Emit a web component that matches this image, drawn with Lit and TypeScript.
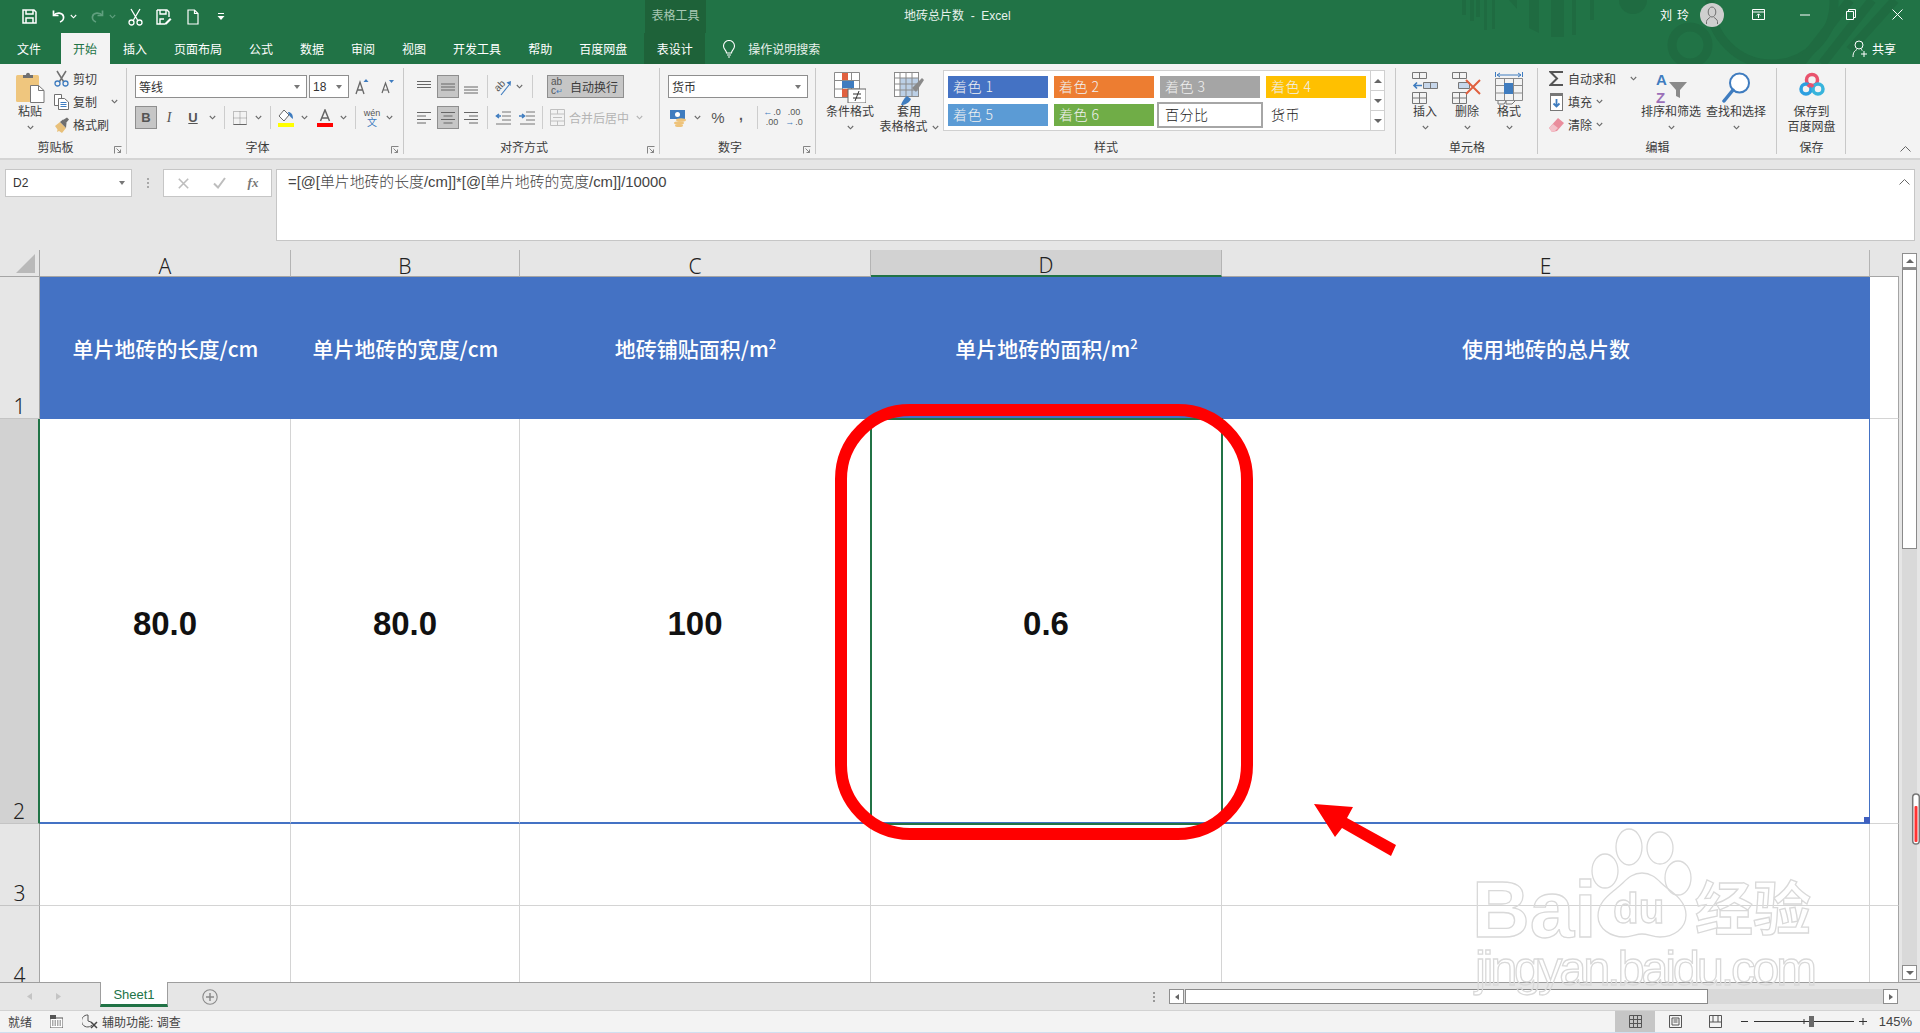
import { LitElement, html, css } from "lit";
import { customElement } from "lit/decorators.js";

const BLUE = "#3f7cbf";
const RED = "#e0603f";

const caret = (c = "#6a6a6a") => html`<svg class="ic" width="7" height="5" viewBox="0 0 7 5"><path d="M.8 1 3.5 3.8 6.2 1" fill="none" stroke=${c} stroke-width="1.1"/></svg>`;
const sep = () => html`<i class="vsep"></i>`;
const slot = (w: number, t: unknown) => html`<span class="slot" style="width:${w}px">${t}</span>`;

const I = {
  save: html`<svg class="ic" width="15" height="15" viewBox="0 0 15 15" fill="none" stroke="#fff" stroke-width="1.5"><path d="M1 1h11l2 2v11H1z"/><path d="M4 1v4h7V1M4 14V9h7v5"/></svg>`,
  undo: html`<svg class="ic" width="15" height="15" viewBox="0 0 15 15" fill="none" stroke="#fff" stroke-width="1.7"><path d="M2.5 1.5v5h5"/><path d="M2.5 6.5c3-3.5 9-3 10 1 .5 2.5-1 4.5-3.5 5.5"/></svg>`,
  redo: html`<svg class="ic" width="15" height="15" viewBox="0 0 15 15" fill="none" stroke="#5f9f7e" stroke-width="1.7"><path d="M12.5 1.5v5h-5"/><path d="M12.5 6.5c-3-3.5-9-3-10 1-.5 2.5 1 4.5 3.5 5.5"/></svg>`,
  cutW: html`<svg class="ic" width="15" height="18" viewBox="0 0 15 18" fill="none" stroke="#fff" stroke-width="1.3"><path d="M3 1l6.500 11M12 1 5.500 12"/><circle cx="3.500" cy="14.500" r="2.500"/><circle cx="11.500" cy="14.500" r="2.500"/></svg>`,
  saveAs: html`<svg class="ic" width="16" height="16" viewBox="0 0 16 16" fill="none" stroke="#fff" stroke-width="1.4"><path d="M1 1h10l2 2v5M9 15H1V1"/><path d="M4 1v4h6V1M4 15v-5h4"/><path d="M9 14l5-5 1.500 1.500-5 5H9z" fill="#fff" stroke="none"/></svg>`,
  newDoc: html`<svg class="ic" width="12" height="16" viewBox="0 0 12 16" fill="none" stroke="#fff" stroke-width="1.2"><path d="M1 1h6.500L11 4.500V15H1z"/><path d="M7.500 1v3.500H11"/></svg>`,
  custom: html`<svg class="ic" width="8" height="9" viewBox="0 0 8 9" fill="#fff"><path d="M1 1h6v1H1zM.5 4h7L4 8z"/></svg>`,
  bulb: html`<svg class="ic" width="14" height="18" viewBox="0 0 14 18" fill="none" stroke="#fff" stroke-width="1.1"><path d="M4.500 13c0-3-3-3.500-3-7a5.500 5.500 0 0 1 11 0c0 3.500-3 4-3 7z"/><path d="M5 15h4M6 17h2"/></svg>`,
  ribbonDisp: html`<svg class="ic" width="13" height="11" viewBox="0 0 13 11" fill="none" stroke="#fff"><path d="M.5.500h12v10H.5zM.5 3h12"/><path d="M6.500 9V5M4.800 6.500l1.700-1.700 1.700 1.700"/></svg>`,
  min: html`<svg class="ic" width="10" height="2" viewBox="0 0 10 2"><path d="M0 1h10" stroke="#fff"/></svg>`,
  restore: html`<svg class="ic" width="10" height="11" viewBox="0 0 10 11" fill="none" stroke="#fff"><path d="M.5 2.500h7v8h-7zM2.500 2.500v-2h7v8h-2"/></svg>`,
  close: html`<svg class="ic" width="11" height="11" viewBox="0 0 11 11" stroke="#fff"><path d="M.5.500l10 10M10.500.500l-10 10"/></svg>`,
  avatar: html`<svg class="ic" width="24" height="24" viewBox="0 0 24 24" fill="none" stroke="#6f6f6f"><circle cx="12" cy="12" r="12" fill="#cfcfcf" stroke="none"/><ellipse cx="12" cy="9" rx="3.800" ry="5"/><path d="M6.500 21v-2.500c0-2 2.500-3 3.800-4.500M17.500 21v-2.500c0-2-2.500-3-3.800-4.500"/></svg>`,
  share: html`<svg class="ic" width="16" height="18" viewBox="0 0 16 18" fill="none" stroke="#fff"><circle cx="7" cy="5" r="4"/><path d="M1 17c0-5 2-6.500 4-7.500M9 9.500l1.500.8M12 11v6M9 14h6"/></svg>`,
  paste: html`<svg class="ic" width="29" height="31" viewBox="0 0 29 31"><rect x="0" y="3" width="23" height="27" rx="1.500" fill="#efc67e"/><path d="M7 3h3c0-3 4-3 4 0h3v3H7z" fill="#707070"/><path d="M14.500 13.500h8l5.500 5v12H14.500z" fill="#fff" stroke="#777"/><path d="M22.500 13.500v5H28" fill="none" stroke="#777"/></svg>`,
  cut: html`<svg class="ic" width="15" height="17" viewBox="0 0 15 17" fill="none"><path d="M3 1l6.500 10.500M12 1 5.500 11.500" stroke="#707070" stroke-width="1.5"/><circle cx="3.500" cy="13.500" r="2.500" stroke="${BLUE}" stroke-width="1.3"/><circle cx="11.500" cy="13.500" r="2.500" stroke="${BLUE}" stroke-width="1.3"/></svg>`,
  copy: html`<svg class="ic" width="15" height="16" viewBox="0 0 15 16" fill="#fff" stroke="#707070"><path d="M.5.500h7v11h-7z"/><path d="M4.500 4.500h6l4 3.500v7.500h-10z"/><path d="M6.500 8.500h6M6.500 10.500h6M6.500 12.500h6" stroke="${BLUE}" fill="none"/></svg>`,
  painter: html`<svg class="ic" width="16" height="16" viewBox="0 0 16 16"><path d="M1 9l5-4 6 6-4 5-3-2-2 1 .5-2.500z" fill="#e8c07a"/><path d="M6 5l3-2.500 3.500 3.500L12 11z" fill="#6f6f6f"/><path d="M9 3l4-2.500 2 2L12 6z" fill="#6f6f6f"/></svg>`,
  launcher: html`<svg class="ic" width="8" height="8" viewBox="0 0 8 8" fill="none" stroke="#777"><path d="M.5 7.500v-7h7M2.500 2.500l4 4M3.500 6.500h3v-3" stroke-width=".9"/></svg>`,
  growA: html`<svg class="ic" width="14" height="16" viewBox="0 0 14 16"><path d="M1 15 5 3l4 12M2.500 11h5" fill="none" stroke="#666" stroke-width="1.3"/><path d="M8.500 3 11 0l2.500 3z" fill="${BLUE}"/></svg>`,
  shrinkA: html`<svg class="ic" width="13" height="14" viewBox="0 0 13 14"><path d="M1 13 4.500 3 8 13M2.200 10h4.600" fill="none" stroke="#666" stroke-width="1.2"/><path d="M8 0h5l-2.500 3z" fill="${BLUE}"/></svg>`,
  borders: html`<svg class="ic" width="14" height="14" viewBox="0 0 14 14" fill="none" stroke="#8a8a8a" stroke-dasharray="1 1"><path d="M.5.500h13v13H.5zM7 .5v13M.5 7h13"/><path d="M.5 13.500h13" stroke-dasharray="none" stroke="#666"/></svg>`,
  fill: html`<svg class="ic" width="17" height="18" viewBox="0 0 17 18"><path d="M6 1 1 7l5 5 5-6z" fill="#fff" stroke="#6a6a6a"/><path d="M10 3c3 0 5 2 5 7-2-1-3-3-4-4z" fill="${BLUE}"/><rect x="0" y="14" width="16" height="4" fill="#ffff00"/></svg>`,
  fontColor: html`<svg class="ic" width="17" height="18" viewBox="0 0 17 18"><path d="M3.500 12 8 1l4.500 11M5 9h6" fill="none" stroke="#666" stroke-width="1.5"/><rect x="0" y="14" width="16" height="4" fill="#f00"/></svg>`,
  orient: html`<svg class="ic" width="20" height="18" viewBox="0 0 20 18"><text x="0" y="0" font-size="10" fill="#555" font-family="Liberation Sans" transform="translate(5 14) rotate(-45)">ab</text><path d="M8 17 16 7" stroke="${BLUE}" stroke-width="1.2" fill="none"/><path d="M18 3l-.5 5-4-3.500z" fill="${BLUE}"/></svg>`,
  outdent: html`<svg class="ic" width="16" height="14" viewBox="0 0 16 14"><path d="M7 1h9M7 5h9M7 9h9M1 13h15" stroke="#777"/><path d="M6 5H2M4 3 1.500 5 4 7" stroke="${BLUE}" stroke-width="1.6" fill="none"/></svg>`,
  indent: html`<svg class="ic" width="16" height="14" viewBox="0 0 16 14"><path d="M7 1h9M7 5h9M7 9h9M1 13h15" stroke="#777"/><path d="M0 5h5M3 3 5.500 5 3 7" stroke="${BLUE}" stroke-width="1.6" fill="none"/></svg>`,
  merge: html`<svg class="ic" width="15" height="17" viewBox="0 0 15 17" fill="none" stroke="#c0c0c0"><path d="M.5.500h14v16H.5zM.5 5h14M.5 12h14M7.500.500V5M7.500 12v4.500"/><path d="M3 8.500h9"/></svg>`,
  acct: html`<svg class="ic" width="17" height="18" viewBox="0 0 17 18"><rect x="0" y="1" width="15" height="9" fill="${BLUE}"/><circle cx="7.500" cy="5.500" r="2.500" fill="#fff"/><ellipse cx="11" cy="11" rx="5" ry="1.800" fill="#eec37a"/><ellipse cx="9" cy="14" rx="5" ry="1.800" fill="#eec37a"/><ellipse cx="9" cy="16.500" rx="4" ry="1.500" fill="#eec37a"/></svg>`,
  condFmt: html`<svg class="ic" width="32" height="31" viewBox="0 0 32 31"><path d="M.5.500h25v25H.5zM8.500.500v25M17.500.500v25M.5 8.500h25M.5 17h25" fill="#fff" stroke="#8a8a8a"/><rect x="8" y="1" width="6" height="7" fill="${RED}"/><rect x="8" y="9" width="12" height="7" fill="${BLUE}"/><rect x="8" y="17" width="9" height="8" fill="${RED}"/><rect x="14" y="17" width="18" height="14" fill="#fff" stroke="#666"/><path d="M19 22h8M19 26h8M25 19l-4 10" stroke="#333" fill="none"/></svg>`,
  tableFmt: html`<svg class="ic" width="30" height="33" viewBox="0 0 30 33"><rect x=".5" y=".5" width="24" height="24" fill="#fff" stroke="#8a8a8a"/><rect x="6" y="6" width="18" height="18" fill="#bcd0e6"/><path d="M6 .5v24M12 .5v24M18 .5v24M.5 6h24M.5 12h24M.5 18h24" stroke="#8a8a8a" fill="none"/><path d="M18 16 28 6l2 2-8 12z" fill="#8a8a8a"/><path d="M7 33c1-3 3-7 6-9l4 3c-2 4-6 6-10 6" fill="${BLUE}"/></svg>`,
  ins: html`<svg class="ic" width="26" height="32" viewBox="0 0 26 32" fill="none" stroke="#777"><path d="M.5.500h14v6H.5zM7.500.500v6"/><path d="M11.500 10.500h14v6h-14zM18.500 10.500v6" fill="#c6d6ea"/><path d="M10 13.500H2M5 10.500l-3 3 3 3" stroke="${BLUE}" stroke-width="1.6"/><path d="M.5 20.500h14v11H.5zM7.500 20.500v11M.5 26h14"/></svg>`,
  del: html`<svg class="ic" width="30" height="32" viewBox="0 0 30 32" fill="none" stroke="#777"><path d="M.5.500h14v6H.5zM7.500.500v6"/><path d="M6.500 10.500h11v6h-11z" fill="#c6d6ea"/><path d="M.5 20.500h14v11H.5zM7.500 20.500v11M.5 26h14"/><path d="M14 8l14 14M28 8 14 22" stroke="${RED}" stroke-width="2"/></svg>`,
  fmt: html`<svg class="ic" width="28" height="34" viewBox="0 0 28 34" fill="none" stroke="#8a8a8a"><path d="M2 3h24" stroke="${BLUE}"/><path d="M.5 0v5M27.500 0v5M5 1 2 3l3 2M23 1l3 2-3 2" stroke="${BLUE}"/><path d="M.5 6.500h27v22H.5zM9.500 6.500v22M18.500 6.500v22M.5 13.500h27M.5 21h27"/><rect x="9" y="11" width="9" height="11" fill="${BLUE}" stroke="none"/><path d="M3 29v3h6l2-3M11 29v3h6l3-3" stroke="#777"/></svg>`,
  sigma: html`<svg class="ic" width="15" height="15" viewBox="0 0 15 15"><path d="M14 1H1.500L8 7.500 1.500 14H14" fill="none" stroke="#555" stroke-width="2"/></svg>`,
  fillDown: html`<svg class="ic" width="13" height="18" viewBox="0 0 13 18"><rect x=".5" y=".5" width="12" height="17" fill="#fff" stroke="#777"/><rect x="0" y="0" width="13" height="3" fill="#777"/><path d="M6.500 6v8M3.500 10.500l3 3 3-3" stroke="${BLUE}" stroke-width="1.8" fill="none"/></svg>`,
  eraser: html`<svg class="ic" width="15" height="14" viewBox="0 0 15 14"><path d="M9 0l6 5-7 8-5 1-3-4z" fill="#e98d9c"/><path d="M0 10l4-4 5 4-3 3-3 1z" fill="#f3c1c9"/></svg>`,
  sort: html`<svg class="ic" width="31" height="33" viewBox="0 0 31 33"><text x="0" y="13" font-size="15" font-weight="700" fill="${BLUE}" font-family="Liberation Sans">A</text><text x="0" y="31" font-size="15" font-weight="700" fill="#9b6fb8" font-family="Liberation Sans">Z</text><path d="M13 10h18l-7 8v8l-4-2v-6z" fill="#8a8a8a"/></svg>`,
  find: html`<svg class="ic" width="28" height="33" viewBox="0 0 28 33" fill="none" stroke="${BLUE}"><circle cx="17.500" cy="11" r="9.500" stroke-width="2" fill="#fff"/><path d="M11 18 2 29" stroke-width="3.5" stroke-linecap="round"/></svg>`,
  bdcloud: html`<svg class="ic" width="26" height="26" viewBox="0 0 26 26" fill="none" stroke-width="3.5"><circle cx="13" cy="8" r="5.500" stroke="#e9536d"/><circle cx="7" cy="17" r="5" stroke="#2d9fe0"/><circle cx="19" cy="17" r="5" stroke="#37b4dc"/><path d="M9 15c2-3 3-3 5 0" stroke="#e9536d"/></svg>`,
  collapse: html`<svg class="ic" width="11" height="6" viewBox="0 0 11 6"><path d="M.5 5.500l5-5 5 5" fill="none" stroke="#666"/></svg>`,
  x: html`<svg class="ic" width="11" height="11" viewBox="0 0 11 11"><path d="M.8.800l9.400 9.400M10.200.800.800 10.200" stroke="#bdbdbd" stroke-width="1.6"/></svg>`,
  check: html`<svg class="ic" width="13" height="12" viewBox="0 0 13 12"><path d="M1 6.500l4 4L12 1" fill="none" stroke="#bdbdbd" stroke-width="2"/></svg>`,
  plusCircle: html`<svg class="ic" width="16" height="16" viewBox="0 0 16 16" fill="none" stroke="#8a8a8a"><circle cx="8" cy="8" r="7.200" stroke-width="1.1"/><path d="M8 4v8M4 8h8" stroke-width="1.5"/></svg>`,
  macro: html`<svg class="ic" width="13" height="13" viewBox="0 0 13 13"><rect x="0" y="3" width="13" height="10" fill="#fff" stroke="#555"/><rect x="0" y="0" width="6" height="4" fill="#555"/><path d="M2 6h9M2 8h9M2 10h9" stroke="#555" stroke-dasharray="1.500 1"/></svg>`,
  access: html`<svg class="ic" width="17" height="15" viewBox="0 0 17 15" fill="none" stroke="#555"><path d="M6 1a6 6 0 1 0 4 10"/><path d="M6 1v6l3 1"/><path d="M9 8l6 6M15 8l-6 6" stroke="#444" stroke-width="1.5"/></svg>`,
  vNormal: html`<svg class="ic" width="13" height="13" viewBox="0 0 13 13" fill="none" stroke="#555"><path d="M.5.500h12v12H.5zM4.500.500v12M8.500.500v12M.5 4.500h12M.5 8.500h12"/></svg>`,
  vPage: html`<svg class="ic" width="13" height="13" viewBox="0 0 13 13" fill="none" stroke="#555"><path d="M.5.500h12v12H.5zM3 3h7v7H3zM4.500 5h4M4.500 7h4"/></svg>`,
  vBreak: html`<svg class="ic" width="13" height="13" viewBox="0 0 13 13" fill="none" stroke="#555"><path d="M.5.500h12v12H.5zM.5 7h12M4 .5V7M9 .5V7" /></svg>`,
  triL: html`<svg class="ic" width="5" height="7" viewBox="0 0 5 7"><path d="M5 0v7L0 3.500z" fill="#c4c4c4"/></svg>`,
  triR: html`<svg class="ic" width="5" height="7" viewBox="0 0 5 7"><path d="M0 0v7l5-3.500z" fill="#c4c4c4"/></svg>`,
};

const alignIcon = (kind: string) => {
  const paths: Record<string, string> = {
    top: "M0 1.500h14M0 4.500h14M0 7.500h14",
    mid: "M0 4h14M0 7h14M0 10h14",
    bot: "M0 7h14M0 10h14M0 13h14",
    left: "M0 1.500h14M0 5h9M0 8.500h14M0 12h9",
    center: "M0 1.500h14M2.500 5h9M0 8.500h14M2.500 12h9",
    right: "M0 1.500h14M5 5h9M0 8.500h14M5 12h9",
  };
  return html`<svg class="ic" width="14" height="14" viewBox="0 0 14 14"><path d=${paths[kind]} stroke="#666" fill="none"/></svg>`;
};

const COLS = [
  { k: "A", head: html`单片地砖的长度/cm`, val: "80.0" },
  { k: "B", head: html`单片地砖的宽度/cm`, val: "80.0" },
  { k: "C", head: html`地砖铺贴面积/m<sup>2</sup>`, val: "100" },
  { k: "D", head: html`单片地砖的面积/m<sup>2</sup>`, val: "0.6" },
  { k: "E", head: html`使用地砖的总片数`, val: "" },
];
const TABS = ["文件", "开始", "插入", "页面布局", "公式", "数据", "审阅", "视图", "开发工具", "帮助", "百度网盘"];
const STYLES = [
  ["着色 1", "s1"], ["着色 2", "s2"], ["着色 3", "s3"], ["着色 4", "s4"],
  ["着色 5", "s5"], ["着色 6", "s6"], ["百分比", "s7"], ["货币", "s8"],
];

@customElement("app-root")
export class AppRoot extends LitElement {
  static styles = css`
    :host { display: block; width: 1920px; height: 1033px; overflow: hidden; font-family: "Liberation Sans", "Noto Sans CJK SC", sans-serif; font-size: 12px; color: #3c3c3c; }
    * { box-sizing: border-box; }
    .ic { display: block; flex: none; }
    .app { position: relative; width: 1920px; height: 1033px; display: flex; flex-direction: column; background: #e6e6e6; overflow: hidden; }
    .slot { display: flex; align-items: center; justify-content: center; flex: none; height: 100%; }
    .vsep { display: block; width: 1px; height: 23px; background: #cdcdcd; }

    .top { position: relative; background: #217346; color: #fff; height: 64px; display: flex; flex-direction: column; flex: none; }
    .deco { position: absolute; left: 0; top: 0; }
    .trow { position: relative; display: flex; align-items: center; height: 33px; flex: none; }
    .qat { display: flex; align-items: center; width: 645px; height: 100%; padding-left: 21px; }
    .tools { width: 61px; height: 100%; background: #1e6239; color: #a8c8b4; display: flex; align-items: center; justify-content: center; padding-bottom: 4px; }
    .doc { margin-left: 198px; padding-bottom: 4px; white-space: nowrap; color: #e8f1ec; }
    .user { margin-left: auto; display: flex; align-items: center; height: 100%; padding-bottom: 4px; }
    .uname { letter-spacing: 5px; margin-right: 6px; }
    .tabs { position: relative; display: flex; height: 31px; align-items: stretch; padding-left: 3.5px; }
    .tab { padding: 0 13.5px 1px; display: flex; align-items: center; white-space: nowrap; }
    .tab.on { background: #f3f3f3; color: #217346; width: 49px; justify-content: center; padding: 0 0 1px; margin: 0 0 0 6px; }
    .tab.ctx { background: #1e6239; width: 61px; justify-content: center; padding: 0 0 1px; margin-left: 3.5px; }
    .tell { display: flex; align-items: center; gap: 12px; margin-left: 17px; color: #e8f1ec; }
    .shareb { margin-left: auto; display: flex; align-items: center; gap: 4px; padding-right: 24px; }

    .ribbon { display: flex; height: 96px; flex: none; background: #f3f3f3; border-bottom: 2px solid #d4d4d4; position: relative; }
    .grp { position: relative; display: flex; flex-direction: column; height: 94px; flex: none; }
    .grp::after { content: ""; position: absolute; right: 0; top: 4px; bottom: 4px; width: 1px; background: #c8c8c8; }
    .gbody { height: 75px; display: flex; flex: none; }
    .glabel { height: 18px; text-align: center; line-height: 18px; }
    .hasl .glabel { padding-right: 16px; }
    .launch { position: absolute; right: 5px; bottom: 4px; }
    .w1 { width: 127px; } .w2 { width: 277px; } .w3 { width: 256px; } .w4 { width: 156px; } .w5 { width: 580px; } .w6 { width: 142px; } .w7 { width: 239px; } .w8 { width: 69px; }
    .big { display: flex; flex-direction: column; align-items: center; padding-top: 8px; flex: none; line-height: 15px; white-space: nowrap; }
    .bigic { height: 33px; display: flex; align-items: flex-start; justify-content: center; }
    .bcaret { height: 15px; display: flex; align-items: center; }
    .inl { display: flex; align-items: center; gap: 4px; }
    .small { display: flex; flex-direction: column; padding-top: 3px; flex: none; }
    .srow { display: flex; align-items: center; height: 23px; gap: 4px; white-space: nowrap; }
    .sicon { width: 15px; display: flex; justify-content: center; flex: none; }
    .two { display: flex; flex-direction: column; padding-top: 11px; gap: 8px; }
    .row { display: flex; height: 23px; align-items: center; }
    .combo { height: 23px; background: #fff; border: 1px solid #8e8e8e; display: flex; align-items: center; padding: 0 3px; flex: none; justify-content: space-between; font-size: 12px; color: #333; }
    .tri { width: 0; height: 0; border-left: 3.5px solid transparent; border-right: 3.5px solid transparent; border-top: 4px solid #777; margin-right: 3px; }
    .sel { background: #c6c6c6; border: 1px solid #8e8e8e; height: 23px; display: flex; align-items: center; justify-content: center; flex: none; }
    .b22 { width: 22px; }
    .bb { font-weight: 700; font-size: 13px; color: #555; font-family: "Liberation Sans", sans-serif; }
    .ii { font-style: italic; font-size: 14px; color: #555; font-family: "Liberation Serif", serif; }
    .uu { text-decoration: underline; font-weight: 700; font-size: 13px; color: #555; font-family: "Liberation Sans", sans-serif; }
    .wen { display: flex; flex-direction: column; align-items: center; font-size: 9px; line-height: 10px; color: #555; }
    .wen b { color: #3f7cbf; font-weight: 400; font-size: 10px; }
    .wrap { width: 77px; margin-left: 6px; gap: 5px; justify-content: flex-start; padding-left: 3px; }
    .abc { font-size: 10px; line-height: 9px; color: #555; width: 14px; }
    .abc b { color: #3f7cbf; font-weight: 400; font-size: 8px; }
    .gray { color: #b4b4b4; white-space: nowrap; }
    .pct { font-size: 15px; color: #555; }
    .cma { font-size: 14px; font-weight: 700; color: #555; font-family: "Liberation Sans", sans-serif; position: relative; top: -3px; }
    .dec { display: flex; align-items: center; font-size: 9px; line-height: 9px; color: #555; gap: 1px; white-space: pre; flex-direction: column; }
    .dec span { display: flex; align-items: center; gap: 1px; }
    .dec em { color: #3f7cbf; font-style: normal; font-weight: 700; }

    .gallery { width: 442px; height: 61px; margin: 6px 0 0 3px; background: #fff; border: 1px solid #d0d0d0; display: flex; flex: none; }
    .gcells { width: 426px; display: grid; grid-template-columns: repeat(4, 100px); grid-auto-rows: 22px; gap: 6px; padding: 5px 4px 0 4px; }
    .st { display: flex; align-items: center; padding: 0 0 2px 5px; font-size: 14px; letter-spacing: .5px; color: #f0f0f0; font-family: "Noto Sans CJK SC", sans-serif; font-weight: 300; }
    .s1 { background: #4472c4; } .s2 { background: #ed7d31; } .s3 { background: #a5a5a5; } .s4 { background: #ffc000; } .s5 { background: #5b9bd5; } .s6 { background: #70ad47; }
    .s7 { outline: 2px solid #a6a6a6; outline-offset: 1px; color: #222; margin: 1px 0; }
    .s8 { color: #222; }
    .gscroll { width: 15px; margin-left: auto; display: flex; flex-direction: column; border-left: 1px solid #d0d0d0; }
    .gscroll span { flex: 1; display: flex; align-items: center; justify-content: center; border-bottom: 1px solid #d0d0d0; }
    .gscroll span:last-child { border-bottom: none; }
    .tup { width: 0; height: 0; border-left: 4px solid transparent; border-right: 4px solid transparent; border-bottom: 4px solid #666; }
    .tdn { width: 0; height: 0; border-left: 4px solid transparent; border-right: 4px solid transparent; border-top: 4px solid #666; }
    .collapse { position: absolute; right: 9px; bottom: 6px; }

    .fbar { height: 90px; flex: none; padding: 9px 5px 0 5px; display: flex; background: #e6e6e6; align-items: flex-start; }
    .name { width: 127px; height: 28px; background: #fff; border: 1px solid #c6c6c6; display: flex; align-items: center; justify-content: space-between; padding: 0 3px 0 7px; color: #333; }
    .dots { width: 31px; height: 28px; display: flex; flex-direction: column; align-items: center; justify-content: center; gap: 2px; }
    .dots i { width: 2px; height: 2px; background: #a8a8a8; display: block; }
    .fx { width: 109px; height: 28px; background: #fff; border: 1px solid #c6c6c6; display: flex; align-items: center; }
    .fxt { font-family: "Liberation Serif", serif; font-style: italic; font-weight: 700; font-size: 13px; color: #777; }
    .formula { margin-left: 4px; width: 1639px; height: 72px; background: #fff; border: 1px solid #c6c6c6; padding: 3px 0 0 11px; display: flex; justify-content: space-between; color: #444; line-height: 18px; font-size: 14.85px; font-weight: 300; }
    .fcaret { margin: 6px 4px 0 0; }

    .sheet { height: 732px; flex: none; display: flex; }
    .grid { width: 1899px; height: 732px; display: grid; grid-template-columns: 40px 251px 229px 351px 351px 648px 29px; grid-template-rows: 27px 142px 405px 82px 82px; background: #fff; overflow: hidden; }
    .corner { background: #e6e6e6; border-bottom: 1px solid #a5a5a5; border-right: 1px solid #a5a5a5; display: flex; justify-content: flex-end; align-items: flex-end; padding: 0 4px 3px 0; }
    .ch { background: #e6e6e6; border-bottom: 1px solid #a5a5a5; border-right: 1px solid #b4b4b4; display: flex; align-items: center; justify-content: center; padding-top: 5px; font-size: 21px; color: #222; font-family: "Noto Sans", sans-serif; font-weight: 300; }
    .ch.on { background: #d2d2d2; border-bottom: 2px solid #217346; }
    .ch.blank { background: #e6e6e6; border-right: none; }
    .rh { background: #e6e6e6; border-right: 1px solid #a5a5a5; border-bottom: 1px solid #c4c4c4; display: flex; align-items: flex-end; justify-content: center; font-size: 21px; line-height: 23px; color: #222; font-family: "Noto Sans", sans-serif; font-weight: 300; }
    .rh.on { background: #d2d2d2; border-right: 2px solid #217346; }
    .th { background: #4472c4; color: #fff; display: flex; align-items: center; justify-content: center; font-size: 21px; font-weight: 500; font-family: "Noto Sans CJK SC", sans-serif; white-space: nowrap; }
    .th sup { font-size: 13px; line-height: 0; position: relative; top: -4px; vertical-align: super; }
    .td { border-right: 1px solid #d4d4d4; border-bottom: 1px solid #d4d4d4; display: flex; align-items: center; justify-content: center; padding-top: 7px; font-size: 33px; font-weight: 700; color: #111; background: #fff; position: relative; }
    .td.last { border-bottom: 2px solid #4472c4; }
    .td.edge { border-right: 1px solid #4472c4; }
    .td.active { outline: 2px solid #217346; outline-offset: -1px; z-index: 1; }
    .blankc { border-bottom: 1px solid #d4d4d4; border-right: 1px solid #a5a5a5; background: #fff; }
    .handle { position: absolute; right: -1px; bottom: -1px; width: 6px; height: 6px; background: #3f5fbf; }

    .vs { width: 21px; background: #e6e6e6; padding: 3px 3px 2px 3px; display: flex; flex-direction: column; }
    .vtrack { flex: 1; background: #d9d9d9; display: flex; flex-direction: column; }
    .vbtn { height: 15px; flex: none; background: #fff; border: 1px solid #8e8e8e; display: flex; align-items: center; justify-content: center; }
    .vthumb { height: 281px; background: #fff; border: 1px solid #8a8a8a; border-top: 2px solid #8a8a8a; }
    .vspace { flex: 1; }

    .tbar { height: 28px; flex: none; border-top: 1px solid #9e9e9e; background: #e6e6e6; display: flex; align-items: flex-start; position: relative; z-index: 2; }
    .nav { display: flex; align-items: center; height: 27px; padding-left: 27px; gap: 24px; width: 100px; }
    .stab { width: 68px; height: 25px; background: #fff; border-bottom: 3px solid #217346; border-left: 1px solid #9e9e9e; border-right: 1px solid #9e9e9e; margin-top: -1px; padding-top: 2px; display: flex; align-items: center; justify-content: center; color: #217346; font-size: 13px; }
    .plus { margin-left: 34px; height: 27px; display: flex; align-items: center; }
    .hdots { margin-left: 934px; height: 27px; display: flex; flex-direction: column; align-items: center; justify-content: center; gap: 2px; width: 3px; }
    .hdots i { width: 2px; height: 2px; background: #999; display: block; }
    .hs { margin: 6px 0 0 14px; width: 729px; height: 15px; display: flex; background: #d9d9d9; }
    .hbtn { width: 15px; background: #fff; border: 1px solid #8e8e8e; display: flex; align-items: center; justify-content: center; flex: none; }
    .hbtn .tl { width: 0; height: 0; border-top: 3.5px solid transparent; border-bottom: 3.5px solid transparent; border-right: 4px solid #666; }
    .hbtn .tr { width: 0; height: 0; border-top: 3.5px solid transparent; border-bottom: 3.5px solid transparent; border-left: 4px solid #666; }
    .hthumb { width: 523px; margin-left: 1px; background: #fff; border: 1px solid #8a8a8a; }

    .status { height: 23px; flex: none; background: #f3f3f3; border-top: 1px solid #d2d2d2; border-bottom: 1px solid #cfdff0; display: flex; align-items: stretch; color: #444; position: relative; z-index: 2; }
    .sl { display: flex; align-items: center; padding-left: 8px; }
    .views { margin-left: auto; display: flex; }
    .view { width: 40px; display: flex; align-items: center; justify-content: center; }
    .view.on { background: #c6c6c6; }
    .zsvg { margin: 4px 0 0 6px; }
    .zlabel { width: 52px; text-align: right; padding-right: 8px; line-height: 21px; font-size: 13px; }

    .overlay { position: absolute; left: 0; top: 0; z-index: 5; pointer-events: none; }
    .ring { position: absolute; left: 835px; top: 404px; width: 418px; height: 436px; border: 12px solid #ff0000; border-radius: 75px; z-index: 5; pointer-events: none; }
    .wm { fill: none; stroke: #d9d9d9; stroke-width: 1.3; font-family: "Liberation Sans", "Noto Sans CJK SC", sans-serif; filter: blur(.4px); }
    .wm1 { font-size: 80px; font-weight: 700; }
    .wm2 { font-size: 42px; font-weight: 700; }
    .wm3 { font-size: 58px; font-weight: 700; font-family: "Noto Sans CJK SC", sans-serif; }
    .wm4 { font-size: 49px; }
  `;

  private big(icon: unknown, l1: string, l2: unknown, w: number) {
    return html`<div class="big" style="width:${w}px"><div class="bigic">${icon}</div><div>${l1}</div>${l2 ? html`<div>${l2}</div>` : html`<div class="bcaret">${caret()}</div>`}</div>`;
  }

  private top() {
    return html`<div class="top">
      <svg class="deco" width="1920" height="64" viewBox="0 0 1920 64" fill="#1f6b41">
        <path d="M1462 0h4v15h-4zM1470 0h4v21h-4zM1476 0h4v17h-4zM1484 0h3v30h-3zM1492 0h3v29h-3zM1509 0l8 9V0zM1529 0h10v33l-10-5zM1551 0h13v37h-13zM1572 0h4v35h-4zM1590 0h4v20h-4z"/>
        <circle cx="1633" cy="0" r="14"/>
        <g fill="none" stroke="#1f6b41" stroke-width="9"><circle cx="1772" cy="2" r="62"/><circle cx="1690" cy="45" r="18"/><path d="M1850 0l-50 64M1872 0l-50 64M1895 0l-45 50"/></g>
      </svg>
      <div class="trow">
        <div class="qat">
          ${slot(16, I.save)}${slot(13, "")}${slot(16, I.undo)}${slot(14, caret("#fff"))}
          ${slot(9, "")}${slot(16, I.redo)}${slot(14, caret("#5f9f7e"))}${slot(8, "")}
          ${slot(16, I.cutW)}${slot(13, "")}${slot(16, I.saveAs)}${slot(13, "")}${slot(16, I.newDoc)}${slot(12, "")}${slot(16, I.custom)}
        </div>
        <div class="tools">表格工具</div>
        <div class="doc">地砖总片数&nbsp; - &nbsp;Excel</div>
        <div class="user">
          <span class="uname">刘玲</span>${I.avatar}
          ${slot(68, I.ribbonDisp)}${slot(26, I.min)}${slot(66, I.restore)}${slot(26, I.close)}${slot(10, "")}
        </div>
      </div>
      <div class="tabs">
        ${TABS.map((t) => html`<div class="tab ${t === "开始" ? "on" : ""}">${t}</div>`)}
        <div class="tab ctx">表设计</div>
        <div class="tell">${I.bulb}<span>操作说明搜索</span></div>
        <div class="shareb">${I.share}<span>共享</span></div>
      </div>
    </div>`;
  }

  private clipboard() {
    return html`<div class="grp w1 hasl">
      <div class="gbody">
        <div class="big" style="width:40px;margin-left:10px">
          <div class="bigic">${I.paste}</div><div>粘贴</div><div class="bcaret">${caret()}</div>
        </div>
        <div class="small" style="margin-left:4px">
          <div class="srow"><span class="sicon">${I.cut}</span>剪切</div>
          <div class="srow"><span class="sicon">${I.copy}</span>复制<span style="margin-left:10px">${caret()}</span></div>
          <div class="srow"><span class="sicon">${I.painter}</span>格式刷</div>
        </div>
      </div>
      <div class="glabel">剪贴板</div><div class="launch">${I.launcher}</div>
    </div>`;
  }

  private font() {
    return html`<div class="grp w2 hasl">
      <div class="gbody"><div class="two" style="padding-left:8px">
        <div class="row">
          <div class="combo" style="width:172px">等线<i class="tri"></i></div>
          <div class="combo" style="width:40px;margin-left:2px">18<i class="tri"></i></div>
          ${slot(26, I.growA)}${slot(24, I.shrinkA)}
        </div>
        <div class="row">
          <div class="sel b22 bb">B</div>
          ${slot(24, html`<span class="ii">I</span>`)}${slot(24, html`<span class="uu">U</span>`)}${slot(14, caret())}
          ${slot(10, sep())}${slot(22, I.borders)}${slot(14, caret())}${slot(10, sep())}
          ${slot(22, I.fill)}${slot(14, caret())}${slot(28, I.fontColor)}${slot(8, caret())}${slot(16, sep())}
          ${slot(18, html`<span class="wen">wén<b>文</b></span>`)}${slot(16, caret())}
        </div>
      </div></div>
      <div class="glabel">字体</div><div class="launch">${I.launcher}</div>
    </div>`;
  }

  private align() {
    return html`<div class="grp w3 hasl">
      <div class="gbody"><div class="two" style="padding-left:9px">
        <div class="row">
          ${slot(22, alignIcon("top"))}<div class="sel b22" style="margin-left:2px">${alignIcon("mid")}</div>${slot(24, alignIcon("bot"))}
          ${slot(8, sep())}${slot(24, I.orient)}${slot(8, caret())}${slot(18, sep())}
          <div class="sel wrap"><span class="abc">ab<br>c<b>↵</b></span>自动换行</div>
        </div>
        <div class="row">
          ${slot(22, alignIcon("left"))}<div class="sel b22" style="margin-left:2px">${alignIcon("center")}</div>${slot(24, alignIcon("right"))}
          ${slot(8, sep())}${slot(24, I.outdent)}${slot(24, I.indent)}${slot(6, sep())}
          ${slot(24, I.merge)}<span class="gray">合并后居中</span>${slot(20, caret("#b4b4b4"))}
        </div>
      </div></div>
      <div class="glabel">对齐方式</div><div class="launch">${I.launcher}</div>
    </div>`;
  }

  private number() {
    return html`<div class="grp w4 hasl">
      <div class="gbody"><div class="two" style="padding-left:8px">
        <div class="row"><div class="combo" style="width:140px">货币<i class="tri"></i></div></div>
        <div class="row">
          ${slot(20, I.acct)}${slot(18, caret())}${slot(24, html`<span class="pct">%</span>`)}${slot(22, html`<span class="cma">,</span>`)}
          ${slot(10, sep())}
          ${slot(20, html`<span class="dec"><span><em>←</em>.0</span><span>.00</span></span>`)}
          ${slot(24, html`<span class="dec"><span>.00</span><span><em>→</em>.0</span></span>`)}
        </div>
      </div></div>
      <div class="glabel">数字</div><div class="launch">${I.launcher}</div>
    </div>`;
  }

  private styleGroup() {
    return html`<div class="grp w5">
      <div class="gbody">
        <div style="width:6px"></div>
        ${this.big(I.condFmt, "条件格式", null, 56)}
        <div class="big" style="width:62px"><div class="bigic">${I.tableFmt}</div><div>套用</div><div class="inl">表格格式${caret()}</div></div>
        <div class="gallery">
          <div class="gcells">${STYLES.map(([t, c]) => html`<div class="st ${c}">${t}</div>`)}</div>
          <div class="gscroll"><span><i class="tup"></i></span><span><i class="tdn"></i></span><span><i class="tdn"></i></span></div>
        </div>
      </div>
      <div class="glabel">样式</div>
    </div>`;
  }

  private cells() {
    return html`<div class="grp w6">
      <div class="gbody"><div style="width:8px"></div>
        ${this.big(I.ins, "插入", null, 42)}${this.big(I.del, "删除", null, 42)}${this.big(I.fmt, "格式", null, 42)}
      </div>
      <div class="glabel">单元格</div>
    </div>`;
  }

  private edit() {
    return html`<div class="grp w7">
      <div class="gbody">
        <div class="small" style="width:101px;padding-left:11px">
          <div class="srow"><span class="sicon">${I.sigma}</span>自动求和<span style="margin-left:10px">${caret()}</span></div>
          <div class="srow"><span class="sicon">${I.fillDown}</span>填充<span>${caret()}</span></div>
          <div class="srow"><span class="sicon">${I.eraser}</span>清除<span>${caret()}</span></div>
        </div>
        ${this.big(I.sort, "排序和筛选", null, 64)}${this.big(I.find, "查找和选择", null, 66)}
      </div>
      <div class="glabel">编辑</div>
    </div>`;
  }

  private baidu() {
    return html`<div class="grp w8">
      <div class="gbody">${this.big(I.bdcloud, "保存到", "百度网盘", 69)}</div>
      <div class="glabel">保存</div>
    </div>`;
  }

  private sheet() {
    const rowCell = (i: number, r: number) => {
      const c = COLS[i];
      if (r === 2) {
        const cls = ["td", "last", i === 3 ? "active" : "", i === 4 ? "edge" : ""].join(" ");
        return html`<div class=${cls}>${c.val}${i === 4 ? html`<i class="handle"></i>` : ""}</div>`;
      }
      return html`<div class="td"></div>`;
    };
    return html`<div class="sheet">
      <div class="grid">
        <div class="corner"><svg class="ic" width="19" height="19" viewBox="0 0 19 19"><path d="M19 0v19H0z" fill="#b9b9b9"/></svg></div>
        ${COLS.map((c) => html`<div class="ch ${c.k === "D" ? "on" : ""}">${c.k}</div>`)}
        <div class="ch blank"></div>

        <div class="rh">1</div>
        ${COLS.map((c) => html`<div class="th">${c.head}</div>`)}
        <div class="blankc"></div>

        <div class="rh on">2</div>
        ${COLS.map((_, i) => rowCell(i, 2))}
        <div class="blankc"></div>

        <div class="rh">3</div>
        ${COLS.map((_, i) => rowCell(i, 3))}
        <div class="blankc"></div>

        <div class="rh">4</div>
        ${COLS.map((_, i) => rowCell(i, 4))}
        <div class="blankc"></div>
      </div>
      <div class="vs">
        <div class="vtrack">
          <div class="vbtn"><i class="tup"></i></div>
          <div class="vthumb"></div>
          <div class="vspace"></div>
          <div class="vbtn"><i class="tdn"></i></div>
        </div>
      </div>
    </div>`;
  }

  render() {
    return html`<div class="app">
      ${this.top()}
      <div class="ribbon">
        ${this.clipboard()}${this.font()}${this.align()}${this.number()}${this.styleGroup()}${this.cells()}${this.edit()}${this.baidu()}
        <div class="collapse">${I.collapse}</div>
      </div>
      <div class="fbar">
        <div class="name">D2<i class="tri"></i></div>
        <div class="dots"><i></i><i></i><i></i></div>
        <div class="fx">${slot(38, I.x)}${slot(34, I.check)}${slot(34, html`<span class="fxt">fx</span>`)}</div>
        <div class="formula"><span>=[@[单片地砖的长度/cm]]*[@[单片地砖的宽度/cm]]/10000</span><span class="fcaret">${I.collapse}</span></div>
      </div>
      ${this.sheet()}
      <div class="tbar">
        <div class="nav">${I.triL}${I.triR}</div>
        <div class="stab">Sheet1</div>
        <div class="plus">${I.plusCircle}</div>
        <div class="hdots"><i></i><i></i><i></i></div>
        <div class="hs">
          <div class="hbtn"><i class="tl"></i></div>
          <div class="hthumb"></div>
          <div style="flex:1"></div>
          <div class="hbtn"><i class="tr"></i></div>
        </div>
      </div>
      <div class="status">
        <div class="sl" style="width:50px">就绪</div>
        <div class="sl" style="width:32px;padding-left:0">${I.macro}</div>
        <div class="sl" style="padding-left:0;gap:3px">${I.access}<span>辅助功能: 调查</span></div>
        <div class="views">
          <div class="view on">${I.vNormal}</div><div class="view">${I.vPage}</div><div class="view">${I.vBreak}</div>
        </div>
        <svg class="ic zsvg" width="127" height="13" viewBox="0 0 127 13" stroke="#333" fill="none">
          <path d="M0 6.500h7M13 6.500h100M118 6.500h8M122 3v7M63 4v5"/><rect x="68" y="1" width="5" height="11" fill="#6a6a6a" stroke="none"/>
        </svg>
        <div class="zlabel">145%</div>
      </div>

      <div class="ring"></div>
      <svg class="overlay" width="1920" height="1033" viewBox="0 0 1920 1033">
        <path d="M1314 804l39 3-6 11 49 27-5 11-49-28-7 9z" fill="#f00"/>
        <rect x="1912.700" y="794" width="6.600" height="50" rx="3.300" fill="#fff" stroke="#777" stroke-width="1.500"/>
        <rect x="1914.500" y="806" width="3" height="36" rx="1" fill="#f33"/>
        <g class="wm">
          <text class="wm1" x="1472" y="937">Bai</text>
          <ellipse cx="1629" cy="847" rx="13" ry="18"/><ellipse cx="1660" cy="848" rx="13" ry="16"/>
          <ellipse cx="1605" cy="871" rx="13" ry="17"/><ellipse cx="1678" cy="878" rx="13" ry="17"/>
          <path d="M1642 873c12 0 17 9 25 15 8 6 19 14 19 27 0 14-13 22-26 22-7 0-12-3-18-3s-11 3-18 3c-13 0-26-8-26-21 0-14 11-21 19-28 8-6 13-15 25-15z"/>
          <text class="wm2" x="1613" y="923">du</text>
          <text class="wm3" x="1695" y="930">经验</text>
          <text class="wm4" x="1475" y="985" textLength="342">jingyan.baidu.com</text>
        </g>
      </svg>
    </div>`;
  }
}
